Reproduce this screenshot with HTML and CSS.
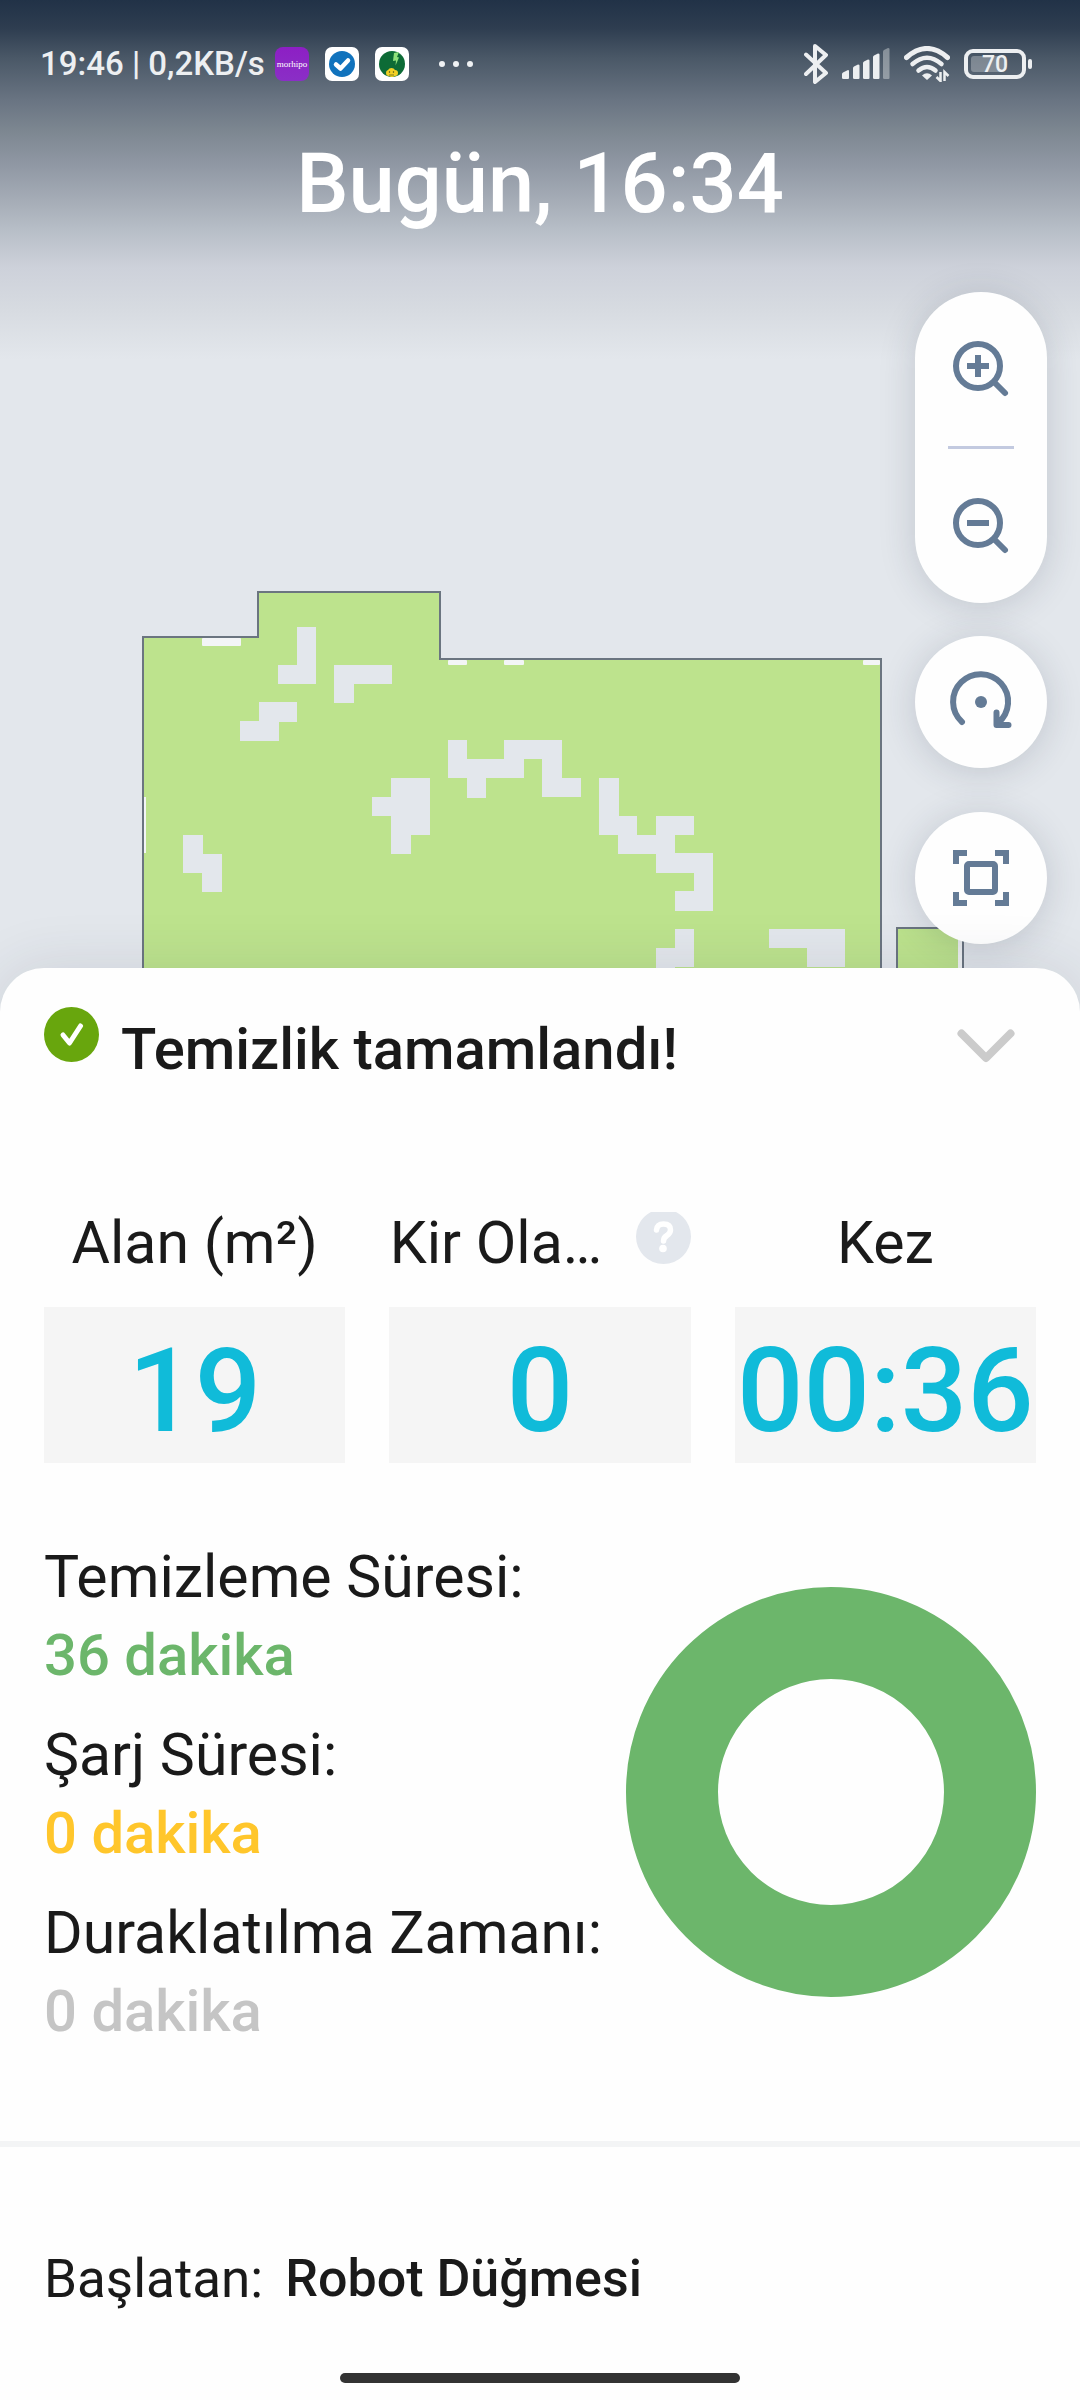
FILE: index.html
```html
<!DOCTYPE html>
<html lang="tr">
<head>
<meta charset="utf-8">
<meta name="viewport" content="width=device-width, initial-scale=1">
<title>Temizlik raporu</title>
<link rel="stylesheet" href="styles.css">
</head>
<body>
<div class="screen">
  <section class="map-view">
    <svg class="map" viewBox="0 0 1080 1012" aria-label="Temizlik haritası" role="img">
      <g class="rooms">
        <path d="M143 1020V637H258V592H440V659H881V1020Z"/>
        <path d="M897 1020V928H963V1020Z"/>
      </g>
      <g class="doors">
        <rect x="202" y="638" width="39" height="8" rx="1"/>
        <rect x="448" y="660" width="19" height="5" rx="1"/>
        <rect x="504" y="660" width="20" height="5" rx="1"/>
        <rect x="863" y="660" width="17" height="5" rx="1"/>
        <rect x="144" y="797" width="2" height="56"/>
        <rect x="958" y="929" width="4" height="90"/>
      </g>
      <g class="gaps">
        <path d="M297 627H316V684H278V665H297Z"/>
        <path d="M334 665H392V684H354V703H334Z"/>
        <path d="M259 702H297V722H279V741H240V721H259Z"/>
        <path d="M183 835H203V854H222V892H202V873H183Z"/>
        <path d="M391 778H430V835H411V854H391V816H372V797H391Z"/>
        <path d="M448 740H467V759H504V740H562V778H581V797H542V759H524V778H486V798H467V778H448Z"/>
        <path d="M599 778H619V816H637V835H656V816H694V835H675V853H713V911H675V891H694V873H656V854H618V835H599Z"/>
        <path d="M656 948H675V929H694V967H675V1012H656Z"/>
        <path d="M769 929H845V967H807V948H769Z"/>
      </g>
    </svg>

    <header class="top">
      <div class="status-bar">
        <span class="clock">19:46 | 0,2KB/s</span>
        <div class="notifications">
          <svg width="34" height="34" viewBox="0 0 34 34">
            <defs><linearGradient id="violet" x1="0" y1="0" x2="0" y2="1"><stop offset="0" stop-color="#8d1fc4"/><stop offset="1" stop-color="#8a2fc6"/></linearGradient></defs>
            <rect width="34" height="34" rx="8" fill="url(#violet)"/>
            <text class="app-name" x="17" y="20" text-anchor="middle">morhipo</text>
          </svg>
          <svg width="34" height="34" viewBox="0 0 34 34">
            <rect width="34" height="34" rx="7" fill="#fff"/>
            <circle cx="17" cy="17" r="13" fill="#1173bd"/>
            <path d="M11 17.500l4.500 4L23 13.500" fill="none" stroke="#fff" stroke-width="4.500" stroke-linecap="round" stroke-linejoin="round"/>
          </svg>
          <svg width="34" height="34" viewBox="0 0 34 34">
            <rect width="34" height="34" rx="7" fill="#fff"/>
            <circle cx="17" cy="17" r="13" fill="#0d6b36"/>
            <path d="M19 6l5-1-2 5 2 .5-3.500 8 .5-5-3 .5Z" fill="#8ee07a"/>
            <path d="M11 26a3 3 0 0 1 2-3 4 4 0 0 1 7 0 3 3 0 0 1 3 3 3 3 0 0 1-3 3q-3 2-6 0a3 3 0 0 1-3-3Z" fill="#f3d024"/>
            <path d="M14.500 24v2M18.500 24v2M14 28h5" stroke="#7d7b1c" stroke-width="1.200"/>
          </svg>
        </div>
        <svg class="more" width="34" height="8" viewBox="0 0 34 8" fill="#f0f2f4"><circle cx="3" cy="4" r="3"/><circle cx="17" cy="4" r="3"/><circle cx="31" cy="4" r="3"/></svg>
        <div class="system">
          <svg width="24" height="40" viewBox="0 0 24 40" fill="none" stroke="#edeff1" stroke-width="4" stroke-linecap="round" stroke-linejoin="round"><path d="M2 10.500L22 29 11 38V2L22 11 2 30"/></svg>
          <svg width="48" height="32" viewBox="0 0 48 32" fill="#edeff1">
            <path d="M0 26q0-1 1-1.500l5-2.500q1 0 1 1v7q0 1-1 1H1.500Q0 31 0 30Z"/>
            <path d="M11 20q0-1 1-1.500l4-2q1.500 0 1.500 1V30q0 1-1 1h-4q-1.500 0-1.500-1Z"/>
            <path d="M21 15q0-1 1-1.500l4-2q1.500 0 1.500 1V30q0 1-1 1h-4q-1.500 0-1.500-1Z"/>
            <path d="M31 9q0-1 1-1.500l4-2q1.500 0 1.500 1V30q0 1-1 1h-4Q31 31 31 30Z"/>
            <path d="M41 3.500q0-1 1-1.500l4-2q1.500 0 1.500 1V30q0 1-1 1h-4q-1.500 0-1.500-1Z" opacity=".4"/>
          </svg>
          <svg width="46" height="36" viewBox="0 0 46 36" fill="none" stroke="#edeff1">
            <path d="M2.500 11.500Q23-6.500 43.500 11.500" stroke-width="5" stroke-linecap="round"/>
            <path d="M8.500 18Q23 5.500 37.500 18" stroke-width="4.500" stroke-linecap="round"/>
            <path d="M14.500 24.500Q23 17.500 31.500 24.500" stroke-width="4.500" stroke-linecap="round"/>
            <path d="M23 34l-5-4.500q5-4.500 10 0Z" fill="#edeff1" stroke="none"/>
            <path d="M36.500 26v9l-4-4M40.500 35v-9l4 4" stroke-width="2.500"/>
          </svg>
          <svg class="battery" width="69" height="32" viewBox="0 0 69 32">
            <rect x="2" y="3" width="58" height="26" rx="7" fill="none" stroke="#edeff1" stroke-width="4"/>
            <rect x="7" y="8" width="34" height="16" rx="3" fill="#fff" opacity=".28"/>
            <rect x="64" y="11" width="4" height="10" rx="2" fill="#edeff1"/>
            <text class="charge" x="31" y="24" text-anchor="middle">70</text>
          </svg>
        </div>
      </div>
      <h1 class="title">Bugün, 16:34</h1>
    </header>

    <div class="controls">
      <div class="zoom-group">
        <button type="button" class="zoom-button" aria-label="Yakınlaştır">
          <svg width="66" height="66" viewBox="0 0 66 66"><circle cx="30" cy="30" r="22"/><path d="M30 19v22M19 30h22"/><path d="M47 47l10 10" stroke-linecap="round"/></svg>
        </button>
        <hr class="zoom-rule">
        <button type="button" class="zoom-button" aria-label="Uzaklaştır">
          <svg width="66" height="66" viewBox="0 0 66 66"><circle cx="30" cy="30" r="22"/><path d="M19 30h22"/><path d="M47 47l10 10" stroke-linecap="round"/></svg>
        </button>
      </div>
      <button type="button" class="round-button" aria-label="Haritayı döndür">
        <svg width="66" height="66" viewBox="0 0 66 66"><path d="M14 53A27.500 27.500 0 1 1 50 54M48.500 43.500V56H60.500" stroke-linecap="round" stroke-linejoin="round"/><circle class="dot" cx="33" cy="33" r="6"/></svg>
      </button>
      <button type="button" class="round-button" aria-label="Haritayı sığdır">
        <svg width="66" height="66" viewBox="0 0 66 66"><rect x="19" y="19" width="28" height="28" rx="2"/><path d="M8 19V8H19M47 8H58V19M58 47V58H47M19 58H8V47"/></svg>
      </button>
    </div>
  </section>

  <main class="sheet">
    <div class="result">
      <svg width="55" height="55" viewBox="0 0 55 55"><circle cx="27.500" cy="27.500" r="27.500" fill="#68a60d"/><path d="M19 28l6.500 8L36.500 19" fill="none" stroke="#fff" stroke-width="5" stroke-linecap="round" stroke-linejoin="round"/></svg>
      <h2 class="result-title">Temizlik tamamlandı!</h2>
      <button type="button" class="collapse" aria-label="Daralt">
        <svg width="58" height="34" viewBox="0 0 58 34"><path d="M4.500 4.500L29 29 53.500 4.500" fill="none" stroke="#cbcbcb" stroke-width="8" stroke-linecap="round" stroke-linejoin="round"/></svg>
      </button>
    </div>

    <div class="stats">
      <div class="stat">
        <div class="stat-head"><span class="stat-label">Alan (m²)</span></div>
        <div class="stat-value">19</div>
      </div>
      <div class="stat">
        <div class="stat-head">
          <span class="stat-label">Kir Ola…</span>
          <button type="button" class="help" aria-label="Kir olayları hakkında bilgi">
            <svg width="55" height="52" viewBox="0 0 55 52"><circle cx="27.500" cy="24.500" r="27.500" fill="#e3e7ed"/><path d="M20.500 18Q21 12 27.500 12 34.500 12 34.500 18 34.500 21 31 23.500 27.500 25.500 27.500 29" fill="none" stroke="#fff" stroke-width="5.500" stroke-linecap="round"/><circle cx="27" cy="36.500" r="3.800" fill="#fff"/></svg>
          </button>
        </div>
        <div class="stat-value">0</div>
      </div>
      <div class="stat">
        <div class="stat-head"><span class="stat-label">Kez</span></div>
        <div class="stat-value">00:36</div>
      </div>
    </div>

    <div class="breakdown">
      <dl class="times">
        <div><dt>Temizleme Süresi:</dt><dd class="cleaning">36 dakika</dd></div>
        <div><dt>Şarj Süresi:</dt><dd class="charging">0 dakika</dd></div>
        <div><dt>Duraklatılma Zamanı:</dt><dd class="paused">0 dakika</dd></div>
      </dl>
      <svg class="donut" viewBox="0 0 410 410" role="img" aria-label="Temizleme 36 dakika"><circle cx="205" cy="205" r="159" fill="none" stroke="#6cb66b" stroke-width="92"/></svg>
    </div>

    <p class="started-by"><span>Başlatan:</span><strong>Robot Düğmesi</strong></p>
    <div class="home-bar"></div>
  </main>
</div>
</body>
</html>
```
FILE: styles.css
```css
* { box-sizing: border-box; }

body {
  margin: 0;
  background: #fefefe;
  color: #1a1a1a;
  font-family: Roboto, "Noto Sans", sans-serif;
  font-size: 59px;
  line-height: 78px;
}

h1, h2, p, dl, dd { margin: 0; }

button {
  padding: 0;
  border: 0;
  background: none;
  cursor: pointer;
}

svg { display: block; flex: none; }

/* Map with its overlays */
.map-view { position: relative; background: #e3e7ec; }
.map { width: 100%; height: auto; }
.rooms { fill: #bde38d; stroke: #6b7580; stroke-width: 2; }
.doors { fill: #f3f5f6; }
.gaps { fill: #e3e7ec; }

.top {
  position: absolute;
  inset: 0 0 auto;
  padding-bottom: 120px;
  background: linear-gradient(#213247 0, #2e3d50 28px, #4a5867 58px, #697482 100px, #7e8892 133px, #9199a5 167px, #a5acb6 200px, #b9c0c9 233px, #cdd1da 267px, #d7dbe1 310px, #e3e7ec 360px);
}

.status-bar {
  display: flex;
  align-items: center;
  height: 128px;
  padding: 0 47px 0 40px;
}
.clock { color: #edeff1; font-size: 33px; font-weight: 500; line-height: 40px; }
.notifications { display: flex; gap: 16px; margin-left: 10px; }
.app-name { fill: #fff; font: 9px "Liberation Serif", serif; }
.more { margin-left: 30px; }
.system { display: flex; align-items: center; gap: 14px; margin-left: auto; }
.charge { fill: #edeff1; font-size: 23px; font-weight: 500; line-height: 24px; }

.title {
  color: #fff;
  font-size: 83px;
  font-weight: 500;
  line-height: 112px;
  text-align: center;
}

.controls {
  position: absolute;
  top: 292px;
  right: 33px;
  display: flex;
  flex-direction: column;
  width: 132px;
}
.controls svg { fill: none; stroke: #647b96; stroke-width: 6; }
.controls .dot { fill: #647b96; stroke: none; }
.zoom-group, .round-button {
  background: #fefefe;
  border-radius: 66px;
  box-shadow: 0 4px 36px rgba(40, 50, 70, .18);
}
.zoom-group { margin-bottom: 33px; }
.zoom-button, .round-button {
  display: grid;
  place-items: center;
  width: 132px;
}
.zoom-button { height: 154px; }
.zoom-rule {
  width: 66px;
  height: 3px;
  margin: 0 auto;
  border: 0;
  background: #c3cae0;
}
.round-button { height: 132px; }
.round-button + .round-button { margin-top: 44px; }

/* Result sheet */
.sheet {
  position: relative;
  margin-top: -44px;
  padding: 39px 0 17px;
  background: #fefefe;
  border-radius: 44px 44px 0 0;
  box-shadow: 0 0 60px rgba(40, 50, 70, .12);
}

.result {
  display: flex;
  align-items: flex-start;
  gap: 22px;
  padding: 0 44px;
}
.result-title { font-size: 58px; font-weight: 500; line-height: 84px; }
.collapse {
  display: grid;
  place-items: center;
  width: 100px;
  height: 78px;
  margin-left: auto;
}

.stats {
  display: grid;
  grid-template-columns: repeat(3, 1fr);
  gap: 44px;
  margin-top: 113px;
  padding: 0 44px;
}
.stat-head { display: flex; align-items: flex-start; margin-bottom: 25px; }
.stat-label { flex: 1; text-align: center; white-space: nowrap; }
.help { margin: 8px 0 0 33px; }
.stat-value {
  padding-top: 12px;
  background: #f5f5f5;
  color: #10bbd9;
  font-size: 117px;
  font-weight: 500;
  line-height: 144px;
  text-align: center;
}

.breakdown {
  display: flex;
  align-items: center;
  justify-content: space-between;
  padding: 75px 44px 91px;
  border-bottom: 6px solid #f3f4f5;
}
.times { display: grid; gap: 22px; white-space: nowrap; }
.times dd { font-size: 58px; font-weight: 500; }
.cleaning { color: #6cb66b; }
.charging { color: #ffc62b; }
.paused { color: #c5c5c5; }
.donut { width: 410px; height: 410px; margin-bottom: 4px; }

.started-by {
  display: flex;
  gap: 22px;
  padding: 97px 44px 59px;
  font-size: 53px;
  line-height: 70px;
}
.started-by strong { font-size: 52px; font-weight: 500; }

.home-bar {
  width: 37%;
  height: 10px;
  margin: 0 auto;
  border-radius: 5px;
  background: #333;
}
```
